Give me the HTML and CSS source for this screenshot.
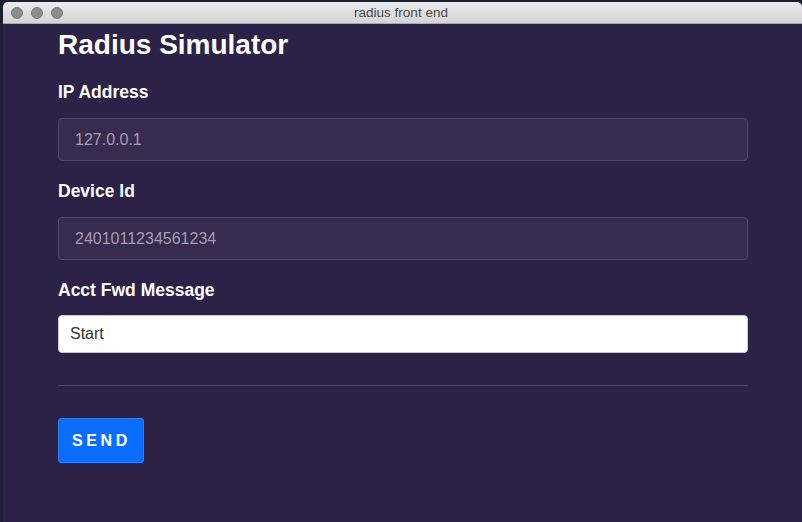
FILE: index.html
```html
<!DOCTYPE html>
<html lang="en">
<head>
<meta charset="utf-8">
<title>radius front end</title>
<link rel="stylesheet" href="styles.css">
</head>
<body>
<div class="window">
  <div class="titlebar">
    <div class="lights"><span class="light"></span><span class="light"></span><span class="light"></span></div>
    <div class="title">radius front end</div>
  </div>
  <main class="content">
    <h1 class="heading">Radius Simulator</h1>
    <form class="form">
      <div class="field">
        <label class="label">IP Address</label>
        <input class="input input-dark" type="text" value="127.0.0.1" readonly>
      </div>
      <div class="field">
        <label class="label">Device Id</label>
        <input class="input input-dark" type="text" value="2401011234561234" readonly>
      </div>
      <div class="field field-last">
        <label class="label">Acct Fwd Message</label>
        <input class="input input-light" type="text" value="Start">
      </div>
      <hr class="divider">
      <button class="send" type="button">SEND</button>
    </form>
  </main>
</div>
</body>
</html>
```

FILE: styles.css
```css
html, body {
  margin: 0;
  padding: 0;
  height: 100%;
}
body {
  background: #1b2131;
  overflow: hidden;
  font-family: "Liberation Sans", Arial, sans-serif;
}
.window {
  margin: 2px 0 0 3px;
  height: calc(100% - 2px);
  display: flex;
  flex-direction: column;
  background: #2c2247;
  border-radius: 5px 5px 0 0;
  overflow: hidden;
}
.titlebar {
  height: 21px;
  flex: 0 0 21px;
  background: linear-gradient(#ebebeb, #d4d4d4);
  border-bottom: 1px solid #a9a9a9;
  display: flex;
  align-items: center;
  position: relative;
}
.lights {
  display: flex;
  gap: 8px;
  padding-left: 8px;
}
.light {
  width: 12px;
  height: 12px;
  border-radius: 50%;
  background: #8c8c8c;
  box-sizing: border-box;
  border: 1px solid #7a7a7a;
}
.title {
  position: absolute;
  left: 0;
  right: 0;
  top: 0;
  line-height: 21px;
  text-align: center;
  font-size: 13.5px;
  color: #4a4a4a;
  margin-left: -3px;
}
.content {
  flex: 1;
  padding: 5px 54px 0 55px;
}
.heading {
  margin: 0;
  font-size: 28px;
  line-height: 32px;
  font-weight: bold;
  color: #ffffff;
}
.form {
  margin: 21px 0 0;
  display: flex;
  flex-direction: column;
  align-items: flex-start;
}
.field {
  width: 100%;
  display: flex;
  flex-direction: column;
  margin-bottom: 20px;
}
.field-last {
  margin-bottom: 0;
}
.label {
  font-size: 17.5px;
  line-height: 21px;
  font-weight: bold;
  color: #ffffff;
  margin-bottom: 15px;
}
.field-last .label {
  margin-bottom: 14px;
}
.input {
  box-sizing: border-box;
  width: 100%;
  font-family: "Liberation Sans", Arial, sans-serif;
  font-size: 16px;
  border-radius: 4px;
  outline: none;
  margin: 0;
}
.input-dark {
  height: 43px;
  padding: 0 16px;
  background: #382b50;
  border: 1px solid #51476c;
  color: #a59db4;
}
.input-light {
  height: 38px;
  padding: 0 11px;
  background: #ffffff;
  border: 1px solid #c9c6d6;
  color: #333333;
}
.divider {
  width: 100%;
  margin: 32px 0 0;
  border: 0;
  border-top: 1px solid #4b4166;
  height: 0;
}
.send {
  margin-top: 32px;
  height: 45px;
  padding: 0 12px 0 13px;
  background: #0a6dfc;
  border: 1px solid #2f7ff5;
  border-radius: 3px;
  color: #ffffff;
  font-family: "Liberation Sans", Arial, sans-serif;
  font-size: 16px;
  font-weight: bold;
  letter-spacing: 3.6px;
  cursor: pointer;
}
```
